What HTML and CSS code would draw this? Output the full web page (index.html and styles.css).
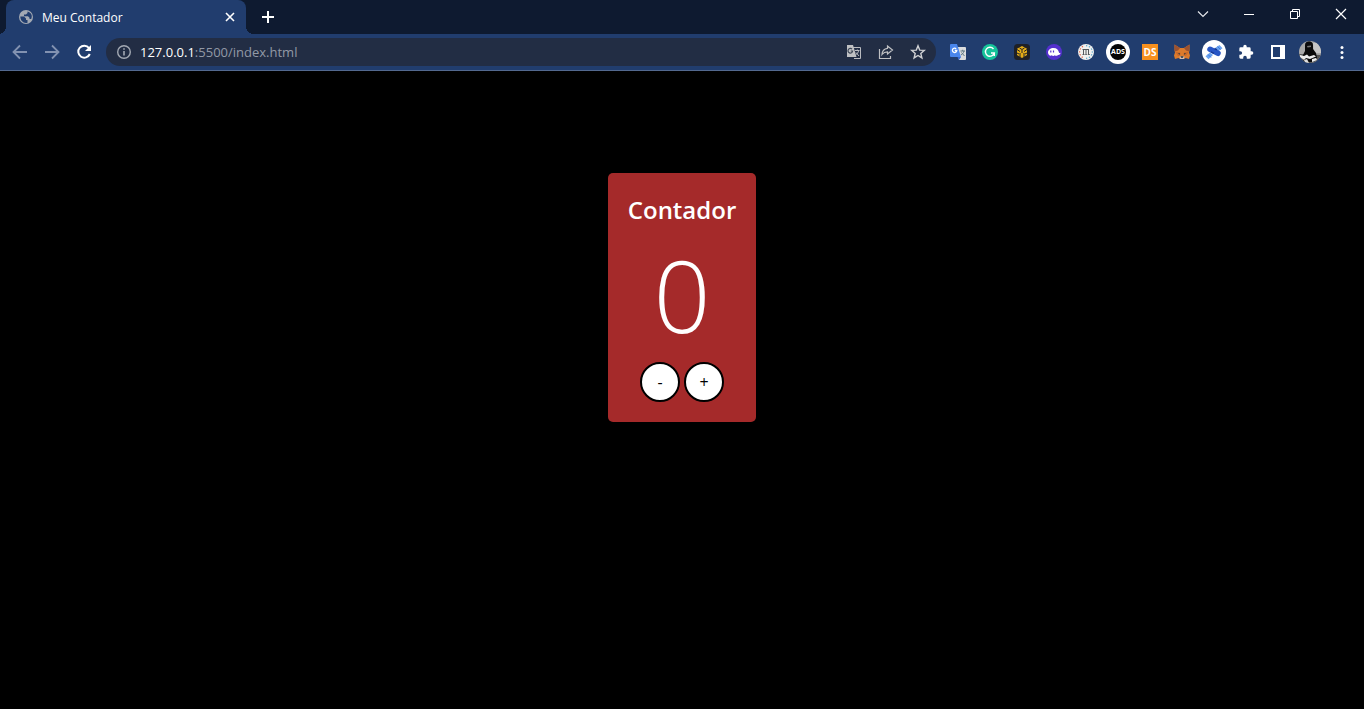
FILE: index.html
```html
<!DOCTYPE html>
<html lang="pt-BR">
<head>
<meta charset="utf-8">
<title>Meu Contador</title>
<link rel="stylesheet" href="styles.css">
</head>
<body>
<header class="browser">
  <div class="tabstrip">
    <div class="tab">
      <svg class="i16" viewBox="0 0 16 16"><circle cx="8" cy="8" r="7" fill="#a3a9b3"/><path d="M2.300 7.500H6l2 2v1.500h1.500v2.700c-4 1-7.200-2-7.200-6.200zM9.500 2.500V4L8 5.500H6v1.800h4l1.500 1.500V10h1.700c1.500-3 .3-6.500-3.700-7.500z" fill="#213d6e"/></svg>
      <span class="tab-title">Meu Contador</span>
      <button class="icon-btn" aria-label="Fechar guia"><svg class="i16" viewBox="0 0 16 16" stroke="#fff" stroke-width="1.600"><path d="M4 4l8 8M12 4l-8 8"/></svg></button>
    </div>
    <button class="icon-btn new-tab" aria-label="Nova guia"><svg class="i16" viewBox="0 0 16 16" stroke="#fff" stroke-width="2"><path d="M8 2v12M2 8h12"/></svg></button>
    <div class="window-controls">
      <button aria-label="Pesquisar guias"><svg class="i16" viewBox="0 0 16 16" fill="none" stroke="#e4e6ea" stroke-width="1.200"><path d="M3 5.500l5 5 5-5"/></svg></button>
      <button aria-label="Minimizar"><svg class="i16" viewBox="0 0 16 16" stroke="#fff"><path d="M3 8.500h10"/></svg></button>
      <button aria-label="Restaurar"><svg class="i16" viewBox="0 0 16 16" fill="none" stroke="#fff"><path d="M3.500 5.500h7v7h-7zM5.500 5.500v-2h7v7h-2"/></svg></button>
      <button aria-label="Fechar"><svg class="i16" viewBox="0 0 16 16" stroke="#fff" stroke-width="1.200"><path d="M3 3l10 10M13 3L3 13"/></svg></button>
    </div>
  </div>
  <div class="toolbar">
    <nav class="nav">
      <button class="icon-btn" aria-label="Voltar"><svg class="i16" viewBox="0 0 16 16" fill="none" stroke="#8292b1" stroke-width="1.800"><path d="M15 8H2M8 1.500L1.500 8 8 14.500"/></svg></button>
      <button class="icon-btn" aria-label="Avançar"><svg class="i16" viewBox="0 0 16 16" fill="none" stroke="#8292b1" stroke-width="1.800"><path d="M1 8h13M8 1.500L14.500 8 8 14.500"/></svg></button>
      <button class="icon-btn" aria-label="Recarregar"><svg class="i16" viewBox="0 0 16 16" fill="none" stroke="#fff" stroke-width="2"><path d="M13 4A6 6 0 1 0 13.800 10"/><path d="M15 1v6H9z" fill="#fff" stroke="none"/></svg></button>
    </nav>
    <div class="omnibox">
      <svg class="i16" viewBox="0 0 16 16" fill="none" stroke="#a3a9b3" stroke-width="1.400"><circle cx="8" cy="8" r="6.300"/><path d="M8 7v4.500M8 4.200v1.600" stroke-width="1.600"/></svg>
      <a class="url" href="#"><span class="host">127.0.0.1</span>:5500/index.html</a>
      <div class="omni-actions">
        <button class="icon-btn" aria-label="Traduzir"><svg class="i16" viewBox="0 0 16 16"><path d="M7 3.500h7.500v11H8" fill="none" stroke="#b9bbc0"/><path d="M1 1h6l3.500 12H1z" fill="#bfc0c3"/><path d="M6 5.200A2.300 2.300 0 1 0 6.600 7H4.700" fill="none" stroke="#3d4656" stroke-width="1.200"/><path d="M9 6.500h4.500M11.300 5.500v1M12.700 6.500c-.4 2-1.500 3.300-3 4.300M10 8.500l3 3.500" stroke="#b9bbc0" fill="none"/></svg></button>
        <button class="icon-btn" aria-label="Compartilhar"><svg class="i16" viewBox="0 0 16 16" fill="none" stroke="#bfc0c3" stroke-width="1.200"><path d="M1.500 5v9.500h11V12M9.500 2l5 4-5 4V7.800C7 7.800 5.500 8.500 4 10.500c.2-3.500 2-5.800 5.500-6.200z"/></svg></button>
        <button class="icon-btn" aria-label="Favoritos"><svg class="i16" viewBox="0 0 16 16" fill="none" stroke="#d0d1d4" stroke-width="1.400"><path d="M8 1.800l1.700 4.300 4.600.3-3.500 3 1.100 4.500L8 11.500l-3.900 2.400 1.100-4.500-3.500-3 4.600-.3z"/></svg></button>
      </div>
    </div>
    <div class="extensions">
      <button class="icon-btn" aria-label="Google Tradutor"><svg class="i16" viewBox="0 0 16 16"><path d="M6 3h9a1 1 0 0 1 1 1v11a1 1 0 0 1-1 1H9z" fill="#dadcde"/><path d="M10.500 7H15M12.700 5.800V7M14 7c-.5 2-1.500 3-3 4M11.500 8.500l3 3.500" fill="none" stroke="#607985"/><path d="M1 0h6l4 13H1a1 1 0 0 1-1-1V1a1 1 0 0 1 1-1z" fill="#4a86ec"/><path d="M7.500 13H11l-2 3z" fill="#3367d6"/><path d="M6.200 4.800A2.200 2.200 0 1 0 6.800 6.500H4.700" fill="none" stroke="#fff" stroke-width="1.300"/></svg></button>
      <button class="icon-btn" aria-label="Grammarly"><svg class="i16" viewBox="0 0 16 16"><circle cx="8" cy="8" r="8" fill="#15c39a"/><path d="M11.500 5A4.500 4.500 0 1 0 12.300 9H9M12.300 8.500V12" fill="none" stroke="#fff" stroke-width="1.400"/></svg></button>
      <button class="icon-btn" aria-label="Carteira BNB"><svg class="i16" viewBox="0 0 16 16"><rect width="16" height="16" rx="3.500" fill="#1e2026"/><path d="M8 2l5 2.800v6.200L8 14l-5-3V4.800z" fill="#e4ad18"/><path d="M3 5.500l3 2M13 5.500l-3 2M8 6v3M6 9v4M10 9v4M5.500 4l2.500 1.500L10.500 4M3 9l2 1M13 9l-2 1" fill="none" stroke="#1e2026"/></svg></button>
      <button class="icon-btn" aria-label="Phantom"><svg class="i16" viewBox="0 0 16 16"><circle cx="8" cy="8" r="8" fill="#5430ce"/><path d="M2 8.500C2 6 4.500 4 7.500 4c3.200 0 5 2 5.500 4.500.3.800 1.300.6 1.300 0 .5 1.500-.8 2.700-2.300 2.500-1 1.200-2.500 1-3.200.3-1 .9-2.300.9-3 0C4.300 12.300 2 11 2 8.500z" fill="#fff"/><path d="M4.800 6.500v2M7.500 6.500v2" stroke="#5430ce" stroke-width="1.200"/></svg></button>
      <button class="icon-btn" aria-label="Extensão m"><svg class="i16" viewBox="0 0 16 16" fill="none"><circle cx="8" cy="8" r="8" fill="#f1f1ef"/><path d="M5 2.400A6.300 6.300 0 0 0 5 13.600" stroke="#e46a50" stroke-width="1.200" stroke-dasharray="1.300 1.700"/><path d="M8 1.700a6.300 6.300 0 0 1 0 12.600" stroke="#5aa7cf" stroke-width="1.200" stroke-dasharray="1.300 1.700"/><path d="M4.500 5.500h6.500M5.500 5.500V10.500M8 5.500v5M10.500 5.500v5M4.500 10.500h2M7.300 10.500h1.500M9.800 10.500h2" stroke="#55595c"/></svg></button>
      <button class="icon-btn" aria-label="ADS"><svg class="i24" viewBox="0 0 24 24"><circle cx="12" cy="12" r="12" fill="#fff"/><circle cx="12" cy="12" r="8" fill="#050505"/><text class="ads" x="12" y="14" text-anchor="middle">ADS</text></svg></button>
      <button class="icon-btn" aria-label="DS"><svg class="i16" viewBox="0 0 16 16"><path d="M0 0h16v16H0z" fill="#f7901e"/><text class="ds" x="8" y="12" text-anchor="middle">DS</text></svg></button>
      <button class="icon-btn" aria-label="MetaMask"><svg class="i16" viewBox="0 0 16 16"><path d="M.5.500L6 4h4l5.500-3.500v6L15 8.500l1 3-1 3.500-3.500-1-1.500 1H6l-1.500-1L1 15l-1-3.500 1-3-.5-2z" fill="#dc7b2c"/><path d="M.5.500L6 4 4 6.500.8 7.500zM15.500.500L10 4l2 2.500 3.200 1z" fill="#9c5230"/><path d="M1.500 8L6 8.500l.5 3L4 12zM14.500 8L10 8.500l-.5 3L12 12z" fill="#c9682a"/><path d="M4 9l2.200.5-.7 1.200zM12 9l-2.200.5.700 1.200z" fill="#24353f"/><path d="M5.500 12.500L8 12l2.500.5L10 15H6z" fill="#d3bcae"/><path d="M6.500 12.200h3L9 13.700H7z" fill="#24303a"/></svg></button>
      <button class="icon-btn" aria-label="Extensão azul"><svg class="i24" viewBox="0 0 24 24"><circle cx="12" cy="12" r="12" fill="#fff"/><path d="M13 8l4.500-3 3 3.200-4.500 3.300zM11 15l-4.500 4.300-3-3L8 12.500z" fill="#6ba4f0"/><path d="M15.500 6.500l3 3M6 14.500l3 3" stroke="#3f78e0"/><path d="M8 9.300l8 4" stroke="#2856c5" stroke-width="5.500" stroke-linecap="round"/><path d="M9 11.800l3 1.500M12.500 8.500l2.500 1.300" stroke="#173994" stroke-width="1.500"/></svg></button>
      <button class="icon-btn" aria-label="Extensões"><svg class="i16" viewBox="0 0 24 24"><path d="M20.500 11H19V7a2 2 0 0 0-2-2h-4V3.500a2.500 2.500 0 0 0-5 0V5H4a2 2 0 0 0-2 2v3.800h1.500a2.700 2.700 0 0 1 0 5.400H2V20a2 2 0 0 0 2 2h3.800v-1.500a2.700 2.700 0 0 1 5.400 0V22H17a2 2 0 0 0 2-2v-4h1.500a2.500 2.500 0 0 0 0-5z" fill="#fff"/></svg></button>
      <button class="icon-btn" aria-label="Painel lateral"><svg class="i16" viewBox="0 0 16 16"><path d="M1 1h14v14H1zM3 3v10h7V3z" fill="#fff" fill-rule="evenodd"/></svg></button>
      <button class="icon-btn" aria-label="Perfil"><svg class="i24" viewBox="0 0 24 24"><clipPath id="avatar"><circle cx="12" cy="12" r="11"/></clipPath><g clip-path="url(#avatar)"><path d="M0 0h24v24H0z" fill="#a9a9a9"/><path d="M15 3h9v10h-8z" fill="#c6c6c6"/><path d="M0 14l24 1v9H0z" fill="#555"/><path d="M7 5c0-5 8-5 8 0v4l3 4 1 5-5 4H6l-2-5 3-6z" fill="#0a0a0a"/><path d="M9 6l4-.5V7L9.500 7.500z" fill="#777"/><path d="M2 15l4 1 3-1.500 2 2 5-1.500 2 1.500-6 2.500-4-1-2 2-4-3zM14 19l4-1 1 2-5 2z" fill="#ededed"/><path d="M6 20l3-1 2 4H7z" fill="#ddd"/></g></svg></button>
      <button class="icon-btn" aria-label="Menu"><svg class="i16" viewBox="0 0 16 16" fill="#fff"><circle cx="8" cy="3.500" r="1.500"/><circle cx="8" cy="8.500" r="1.500"/><circle cx="8" cy="13.500" r="1.500"/></svg></button>
    </div>
  </div>
</header>
<main class="page">
  <section class="counter">
    <h1 class="counter-title">Contador</h1>
    <output class="counter-value">0</output>
    <div class="counter-actions">
      <button class="round" aria-label="Diminuir">-</button>
      <button class="round" aria-label="Aumentar">+</button>
    </div>
  </section>
</main>
</body>
</html>
```
FILE: styles.css
```css
* { box-sizing: border-box; }
body {
  margin: 0;
  min-height: 100vh;
  display: flex;
  flex-direction: column;
  background: #000;
  color: #fff;
  font-family: "Open Sans", "Noto Sans", sans-serif;
}
button {
  padding: 0;
  border: 0;
  background: none;
  color: inherit;
  font: inherit;
  cursor: pointer;
}
svg { display: block; flex: none; }
.i16 { width: 16px; height: 16px; }
.i24 { width: 24px; height: 24px; }

.browser { background: #213d6e; border-bottom: 1px solid #53698f; }
.tabstrip {
  display: flex;
  height: 34px;
  padding-left: 6px;
  background: #0e1a30;
}
.tab {
  position: relative;
  display: flex;
  align-items: center;
  gap: 8px;
  width: 240px;
  padding: 0 8px 0 12px;
  border-radius: 8px 8px 0 0;
  background: #213d6e;
  font-size: 12px;
}
/* flared feet of the active tab */
.tab::before,
.tab::after {
  content: "";
  position: absolute;
  bottom: 0;
  width: 8px;
  height: 8px;
}
.tab::before { right: 100%; background: radial-gradient(circle at 0 0, #0e1a30 8px, #213d6e 8px); }
.tab::after { left: 100%; background: radial-gradient(circle at 100% 0, #0e1a30 8px, #213d6e 8px); }
.tab-title { flex: 1; }
.tab .icon-btn { width: 16px; }
.icon-btn {
  display: flex;
  align-items: center;
  justify-content: center;
  width: 32px;
}
.new-tab { margin-left: 6px; }
.window-controls { display: flex; height: 28px; margin-left: auto; }
.window-controls button {
  display: flex;
  align-items: center;
  justify-content: center;
  width: 46px;
}

.toolbar { display: flex; align-items: center; height: 36px; padding: 0 6px 0 4px; }
.nav, .omni-actions, .extensions { display: flex; align-items: center; }
.omnibox {
  display: flex;
  flex: 1;
  align-items: center;
  gap: 8px;
  height: 28px;
  margin: 0 6px;
  padding: 0 2px 0 10px;
  border-radius: 14px;
  background: #222d44;
}
.url { flex: 1; color: #9299a6; font-size: 13px; text-decoration: none; }
.host { color: #fff; }
.ads { fill: #fff; font-size: 7px; font-weight: 700; }
.ds { fill: #fff; font-size: 10px; font-weight: 700; }

.page { display: flex; flex: 1; align-items: flex-start; justify-content: center; padding-top: 102px; }
.counter {
  display: flex;
  flex-direction: column;
  align-items: center;
  padding: 20px;
  border-radius: 5px;
  background: #a52a2a;
}
.counter-title { margin: 0; font-size: 24px; font-weight: 600; line-height: 33px; }
.counter-value { font-size: 100px; font-weight: 350; line-height: 136px; }
.counter-actions { display: flex; gap: 4px; }
.round {
  width: 40px;
  height: 40px;
  border: 2px solid #000;
  border-radius: 50%;
  background: #fff;
  color: #000;
  font-size: 16px;
  font-weight: 500;
  line-height: 24px;
}
```
